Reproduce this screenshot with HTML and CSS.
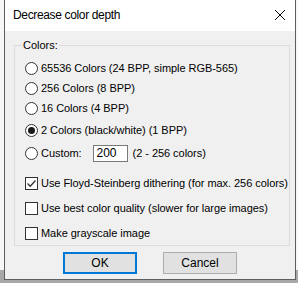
FILE: index.html
```html
<!DOCTYPE html>
<html lang="en">
<head>
  <meta charset="UTF-8">
  <title>Decrease color depth</title>
  <link rel="stylesheet" href="styles.css">
</head>
<body>
  <div class="window">
    <div class="titlebar">
      <span class="title">Decrease color depth</span>
      <svg class="close" width="12" height="12" viewBox="0 0 12 12">
        <path d="M1 1L11 11M11 1L1 11" stroke="#000" stroke-width="1"/>
      </svg>
    </div>
    <div class="client">
      <div class="group">
        <span class="legend">Colors:</span>
        <div class="row r1"><span class="radio"></span>65536 Colors (24 BPP, simple RGB-565)</div>
        <div class="row"><span class="radio"></span>256 Colors (8 BPP)</div>
        <div class="row"><span class="radio"></span>16 Colors (4 BPP)</div>
        <div class="row r4"><span class="radio on"></span>2 Colors (black/white) (1 BPP)</div>
        <div class="row custom"><span class="radio"></span>Custom:<span class="edit">200</span>(2 - 256 colors)</div>
        <div class="row c1"><span class="check on">
          <svg width="11" height="11" viewBox="0 0 11 11"><path d="M1.5 5.5L4.2 8.2L9.5 2.5" fill="none" stroke="#333" stroke-width="1.3"/></svg>
        </span>Use Floyd-Steinberg dithering (for max. 256 colors)</div>
        <div class="row c2"><span class="check"></span>Use best color quality (slower for large images)</div>
        <div class="row c2"><span class="check"></span>Make grayscale image</div>
      </div>
      <div class="buttons">
        <button class="btn default">OK</button>
        <button class="btn">Cancel</button>
      </div>
    </div>
  </div>
</body>
</html>
```

FILE: styles.css
```css
body { margin: 0; height: 283px; background: linear-gradient(#f7f7f7 0, #f7f7f7 270px, #a8a8a8 270px); font-family: 'Liberation Sans', Arial, sans-serif; font-size: 11px; color: #000; overflow: hidden; }
.window { margin-left: 4px; width: 290px; height: 279px; border: 1px solid #5e5e5e; border-top: none; background: #f0f0f0; display: flex; flex-direction: column; }
.titlebar { height: 31px; background: #fff; display: flex; align-items: center; justify-content: space-between; padding: 0 8px 0 8px; box-sizing: border-box; flex: none; }
.title { font-size: 12px; letter-spacing: -0.35px; margin-top: -1px; }
.close { margin-right: 1px; margin-top: -1px; }
.client { flex: 1; padding: 14px 5px 0 9px; }
.group { position: relative; padding: 0 0 0 10px; border: 1px solid #dcdcdc; height: 201px; box-sizing: border-box; }
.legend { position: absolute; left: 7px; top: -8px; padding: 0 1px; background: #f0f0f0; line-height: 14px; }
.row { display: flex; align-items: center; height: 20px; letter-spacing: -0.05px; white-space: nowrap; }
.r1 { margin-top: 12px; }
.r4 { margin-top: 2px; }
.custom { height: 22px; margin-top: 2px; }
.c1 { margin-top: 9px; }
.c2 { margin-top: 5px; }
.radio { width: 11px; height: 11px; border: 1px solid #333; border-radius: 50%; background: #fff; margin-right: 3px; display: flex; align-items: center; justify-content: center; flex: none; }
.radio.on::after { content: ""; width: 7px; height: 7px; border-radius: 50%; background: #1a1a1a; }
.check { width: 11px; height: 11px; border: 1px solid #333; background: #fff; margin-right: 3px; display: flex; align-items: center; justify-content: center; flex: none; }
.edit { width: 30px; height: 15px; border: 1px solid #7a7a7a; background: #fff; margin: 0 5px 0 11px; padding-left: 3px; line-height: 15px; font-size: 12px; }
.buttons { display: flex; gap: 26px; margin: 6px 0 0 49px; }
.btn { width: 74px; height: 22px; font: inherit; font-size: 12px; background: #e1e1e1; border: 1px solid #adadad; padding: 0; color: #000; }
.btn.default { border: 2px solid #0078d7; }
```
